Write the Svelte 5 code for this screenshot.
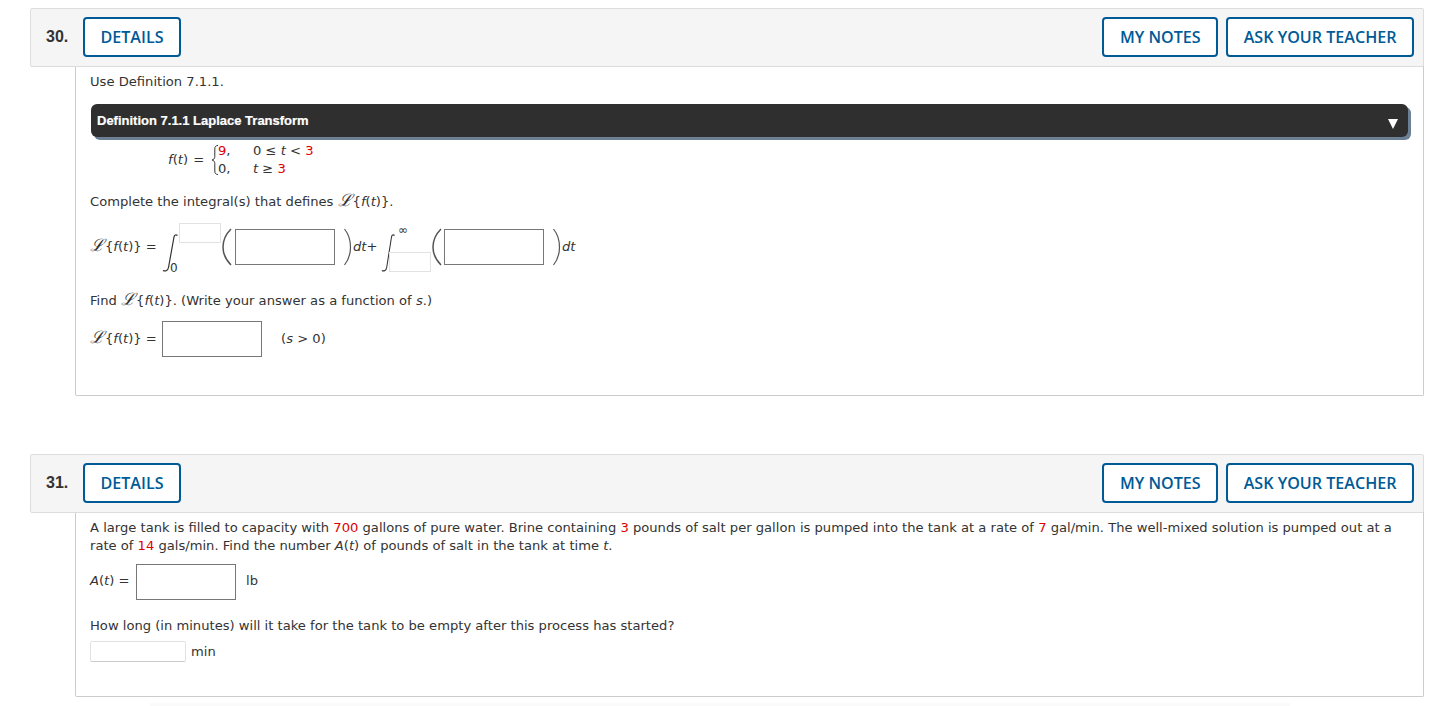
<script>
	const questions = [30, 31];
</script>

{#snippet header(num)}
	<div class="qhead">
		<span class="qnum">{num}.</span>
		<button class="btn">DETAILS</button>
		<span class="spacer"></span>
		<button class="btn">MY NOTES</button>
		<button class="btn">ASK YOUR TEACHER</button>
	</div>
{/snippet}

{#snippet lap()}<span class="script">ℒ</span><span class="brk">{'{'}</span><i>f</i>(<i>t</i>)<span class="brk">{'}'}</span>{/snippet}

{#snippet integral(width)}
	<svg class="intsign" {width} height="40" viewBox="0 0 16 40" preserveAspectRatio="none">
		<path d="M15.500 2.500c-1.500-1.200-3-.8-3.500 1.500L6.500 34.500c-.5 2.800-3 4.200-5.500 3" fill="none" stroke="#333" stroke-width="1.200"/>
	</svg>
{/snippet}

{#snippet paren(right)}
	{#if right}
		<svg class="paren closing" width="8" height="38" viewBox="0 0 8 38">
			<path d="M.5 1c4 5 6 11 6 18s-2 13-6 18" fill="none" stroke="#555" stroke-width="1.200"/>
		</svg>
	{:else}
		<svg class="paren" width="11" height="38" viewBox="0 0 11 38">
			<path d="M10 1C5 6 2 12 2 19s3 13 8 18" fill="none" stroke="#555" stroke-width="1.500"/>
		</svg>
	{/if}
{/snippet}

<main class="page">
	<section class="question q30">
		{@render header(questions[0])}
		<div class="qbody">
			<p class="line first">Use Definition 7.1.1.</p>

			<div class="defbar">
				<span>Definition 7.1.1 Laplace Transform</span>
				<span class="arrow"></span>
			</div>

			<div class="piecewise">
				<span class="fname"><i>f</i>(<i>t</i>) =</span>
				<svg class="brace" width="7" height="32" viewBox="0 0 7 32">
					<path d="M7 1.500C4.800 1.500 3.800 2.800 3.800 5v7.500c0 2-1 3-2.800 3.500 1.800.5 2.800 1.500 2.800 3.500V27c0 2.200 1 3.500 3.200 3.500" fill="none" stroke="#333" stroke-width="1"/>
				</svg>
				<div class="cases">
					<span><b class="red">9</b>,</span><span>0 ≤ <i>t</i> &lt; <b class="red">3</b></span>
					<span>0,</span><span><i>t</i> ≥ <b class="red">3</b></span>
				</div>
			</div>

			<p class="line complete">Complete the integral(s) that defines {@render lap()}.</p>

			<div class="introw">
				<span class="lhs">{@render lap()} =</span>
				{@render integral(16)}
				<div class="limits one">
					<span class="limbox"></span>
					<span class="zero">0</span>
				</div>
				{@render paren(false)}
				<span class="answer a1"></span>
				{@render paren(true)}
				<span class="dt first-dt"><i>dt</i>+</span>
				{@render integral(14)}
				<div class="limits two">
					<span class="inf">∞</span>
					<span class="limbox"></span>
				</div>
				{@render paren(false)}
				<span class="answer a2"></span>
				{@render paren(true)}
				<span class="dt"><i>dt</i></span>
			</div>

			<p class="line find">Find {@render lap()}. (Write your answer as a function of <i>s</i>.)</p>

			<div class="ansrow final">
				<span class="lhs">{@render lap()} =</span>
				<span class="answer"></span>
				<span class="cond">(<i>s</i> &gt; 0)</span>
			</div>
		</div>
	</section>

	<section class="question q31">
		{@render header(questions[1])}
		<div class="qbody">
			<p class="para">A large tank is filled to capacity with <b class="red">700</b> gallons of pure water. Brine containing <b class="red">3</b> pounds of salt per gallon is pumped into the tank at a rate of <b class="red">7</b> gal/min. The well-mixed solution is pumped out at a rate of <b class="red">14</b> gals/min. Find the number <i>A</i>(<i>t</i>) of pounds of salt in the tank at time <i>t</i>.</p>

			<div class="ansrow tank">
				<span class="tanklabel"><i>A</i>(<i>t</i>) =</span>
				<span class="answer"></span>
				<span class="unit">lb</span>
			</div>

			<p class="line howlong">How long (in minutes) will it take for the tank to be empty after this process has started?</p>

			<div class="minrow">
				<span class="smallbox"></span>
				<span>min</span>
			</div>
		</div>
	</section>
	<div class="fade"></div>
</main>

<style>
	:global(body) { background: #fff; }

	.page {
		width: 1440px; height: 706px; overflow: hidden;
		position: relative; box-sizing: border-box;
		padding: 8px 16px 0 30px;
		font-family: "DejaVu Sans", Verdana, sans-serif;
		font-size: 13.120px; line-height: 18px; color: #333;
	}

	.question { width: 1394px; }
	.q31 { margin-top: 58px; }

	.qhead {
		display: flex; align-items: center; gap: 8px;
		height: 59px; box-sizing: border-box;
		padding: 0 9px 0 15px;
		background: #f5f5f5; border: 1px solid #ddd; border-radius: 2px;
		position: relative; z-index: 1;
	}
	.qnum {
		font: bold 16px/20px "Liberation Sans", Arial, sans-serif;
		width: 29px; margin-top: -2px; color: #333;
	}
	.spacer { flex: 1; }
	.btn {
		height: 40px; padding: 0 15.500px; margin-top: -1px;
		background: #fff; border: 2px solid #005a96; border-radius: 4px;
		color: #005a96;
		font: 600 16.100px/1 "Open Sans", sans-serif;
	}

	.qbody {
		margin: -1px 0 0 45px; padding: 0 14px;
		border: 1px solid #ccc; border-top: 0; border-radius: 0 0 2px 2px;
		box-sizing: border-box;
	}
	.q30 .qbody { height: 330px; }
	.q31 .qbody { height: 185px; }

	p { margin: 0; }
	i { font-style: italic; }
	.red { color: #d00; font-weight: normal; }
	.script { font-family: "DejaVu Serif", serif; font-style: italic; font-size: 17px; line-height: 0; margin-right: 1px; }

	.first { padding-top: 7px; }

	.defbar {
		display: flex; align-items: center; justify-content: space-between;
		width: 1317px; height: 33px; box-sizing: border-box;
		margin: 13px 0 0 1px; padding: 0 10px 0 6px;
		background: #2f2f2f; color: #fff; border-radius: 6px;
		box-shadow: 3px 3px 0 #6b7f95;
		font: bold 13px/1 "Liberation Sans", Arial, sans-serif;
		-webkit-text-stroke: 0.2px #fff;
	}
	.arrow {
		width: 0; height: 0; margin-top: 6px;
		border-left: 5px solid transparent; border-right: 5px solid transparent;
		border-top: 10px solid #fff;
	}

	.piecewise {
		display: flex; align-items: center;
		height: 36px; margin: 5px 0 0 78px;
	}
	.fname { width: 43px; word-spacing: 1px; }
	.cases {
		display: grid; grid-template-columns: 35px auto;
		grid-auto-rows: 18px;
	}

	.complete { margin-top: 15px; }

	.introw {
		display: flex; align-items: center;
		height: 49px; margin-top: 12px;
	}
	.lhs { width: 72px; flex: none; }
	.introw .lhs, .introw .dt { margin-top: -2px; }
	.intsign { flex: none; margin-top: 10px; }
	.limits {
		display: flex; flex-direction: column; justify-content: space-between;
		height: 49px; width: 42px; flex: none; position: relative;
	}
	.limits.one { margin-left: 1px; }
	.limits.two { margin-left: -6px; }
	.limbox {
		display: block; width: 42px; height: 20px; box-sizing: border-box;
		border: 1px solid #e2e2e2;
	}
	.zero {
		position: absolute; left: -9px; bottom: -5px;
		font-size: 12px;
	}
	.inf { font-size: 12px; line-height: 14px; margin: 0 0 0 9px; }
	.answer {
		display: block; width: 100px; height: 36px; flex: none; box-sizing: border-box;
		border: 1px solid #777; background: #fff;
	}
	.a1 { margin: -1px 0 0 3px; }
	.a2 { margin: -1px 0 0 2px; }
	.paren { flex: none; margin-top: -2px; }
	.closing { margin-left: 9px; }
	.dt { margin-left: 1px; }
	.first-dt { width: 25px; margin-right: 3px; }

	.find { margin-top: 20px; }

	.ansrow { display: flex; align-items: center; height: 36px; margin-top: 11px; }
	.cond { margin-left: 19px; }

	.para { padding-top: 7px; }
	.tank { margin-top: 9px; }
	.tanklabel { width: 46px; margin-top: -2px; }
	.unit { margin-left: 10px; margin-top: -2px; }
	.howlong { margin-top: 17px; }

	.minrow { display: flex; align-items: center; gap: 5px; margin-top: 6px; height: 21px; }
	.smallbox {
		width: 96px; height: 21px; box-sizing: border-box;
		border: 1px solid #e2e2e2; border-bottom-color: #ccc; border-radius: 2px;
	}

	.fade {
		position: absolute; left: 150px; width: 1140px; top: 703px; height: 4px;
		background: #fafafa;
	}
</style>
